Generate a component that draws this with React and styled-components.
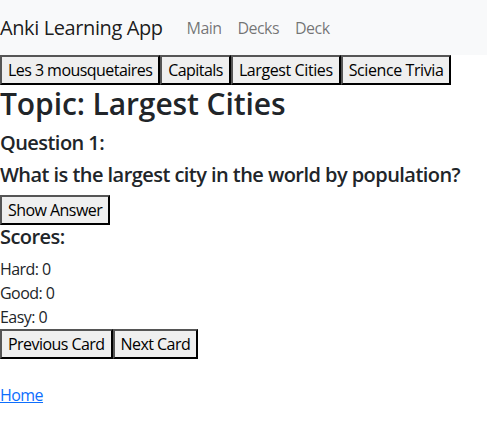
import React, { useState } from 'react';
import styled, { createGlobalStyle } from 'styled-components';

const GlobalStyle = createGlobalStyle`
  * { box-sizing: border-box; }
  body {
    margin: 0;
    font-family: "Open Sans", "Noto Sans", sans-serif;
    font-size: 16px;
    line-height: 1.5;
    letter-spacing: -0.55px;
    color: #212529;
    background: #fff;
  }
`;

const Navbar = styled.nav`
  display: flex;
  align-items: center;
  height: 55px;
  padding: 8px 0;
  background: #f8f9fa;
`;

const Brand = styled.span`
  margin-right: 16px;
  padding: 5px 0;
  font-size: 20px;
  line-height: 30px;
  letter-spacing: -0.4px;
  color: rgba(0, 0, 0, 0.9);
  white-space: nowrap;
`;

const NavList = styled.div`
  display: flex;
`;

const NavLink = styled.a`
  padding: 8px;
  color: rgba(0, 0, 0, 0.55);
  text-decoration: none;
  cursor: pointer;
`;

const ButtonRow = styled.div`
  display: flex;
`;

const Button = styled.button`
  margin: 0;
  padding: 1px 6px;
  font: inherit;
  letter-spacing: ${p => (p.$wide ? '-0.4px' : 'inherit')};
  line-height: 24px;
  color: #000;
  background: #efefef;
  border: 2px solid;
  border-color: #555 #000 #000 #555;
  border-radius: 0;
  cursor: pointer;
`;

const Title = styled.h1`
  margin: 0 0 8px;
  font-size: 30px;
  font-weight: 600;
  line-height: 38px;
  letter-spacing: -0.1px;
`;

const Heading = styled.h5`
  margin: 0 0 8px;
  font-size: 20px;
  font-weight: 600;
  line-height: 24px;
  letter-spacing: -0.55px;
`;

const Score = styled.p`
  margin: 0;
`;

const HomeLink = styled.a`
  display: inline-block;
  margin-top: 24px;
  color: #0d6efd;
  text-decoration: underline;
`;

const decks = ['Les 3 mousquetaires', 'Capitals', 'Largest Cities', 'Science Trivia'];

export default function App() {
  const [scores] = useState({ Hard: 0, Good: 0, Easy: 0 });

  return (
    <>
      <GlobalStyle />
      <Navbar>
        <Brand>Anki Learning App</Brand>
        <NavList>
          <NavLink>Main</NavLink>
          <NavLink>Decks</NavLink>
          <NavLink>Deck</NavLink>
        </NavList>
      </Navbar>
      <ButtonRow>
        {decks.map((d, i) => (
          <Button key={d} $wide={i > 1}>{d}</Button>
        ))}
      </ButtonRow>
      <Title>Topic: Largest Cities</Title>
      <Heading>Question 1:</Heading>
      <Heading>What is the largest city in the world by population?</Heading>
      <ButtonRow>
        <Button>Show Answer</Button>
      </ButtonRow>
      <Heading>Scores:</Heading>
      {Object.entries(scores).map(([k, v]) => (
        <Score key={k}>{`${k}: ${v}`}</Score>
      ))}
      <ButtonRow>
        <Button>Previous Card</Button>
        <Button>Next Card</Button>
      </ButtonRow>
      <HomeLink href="#">Home</HomeLink>
    </>
  );
}
